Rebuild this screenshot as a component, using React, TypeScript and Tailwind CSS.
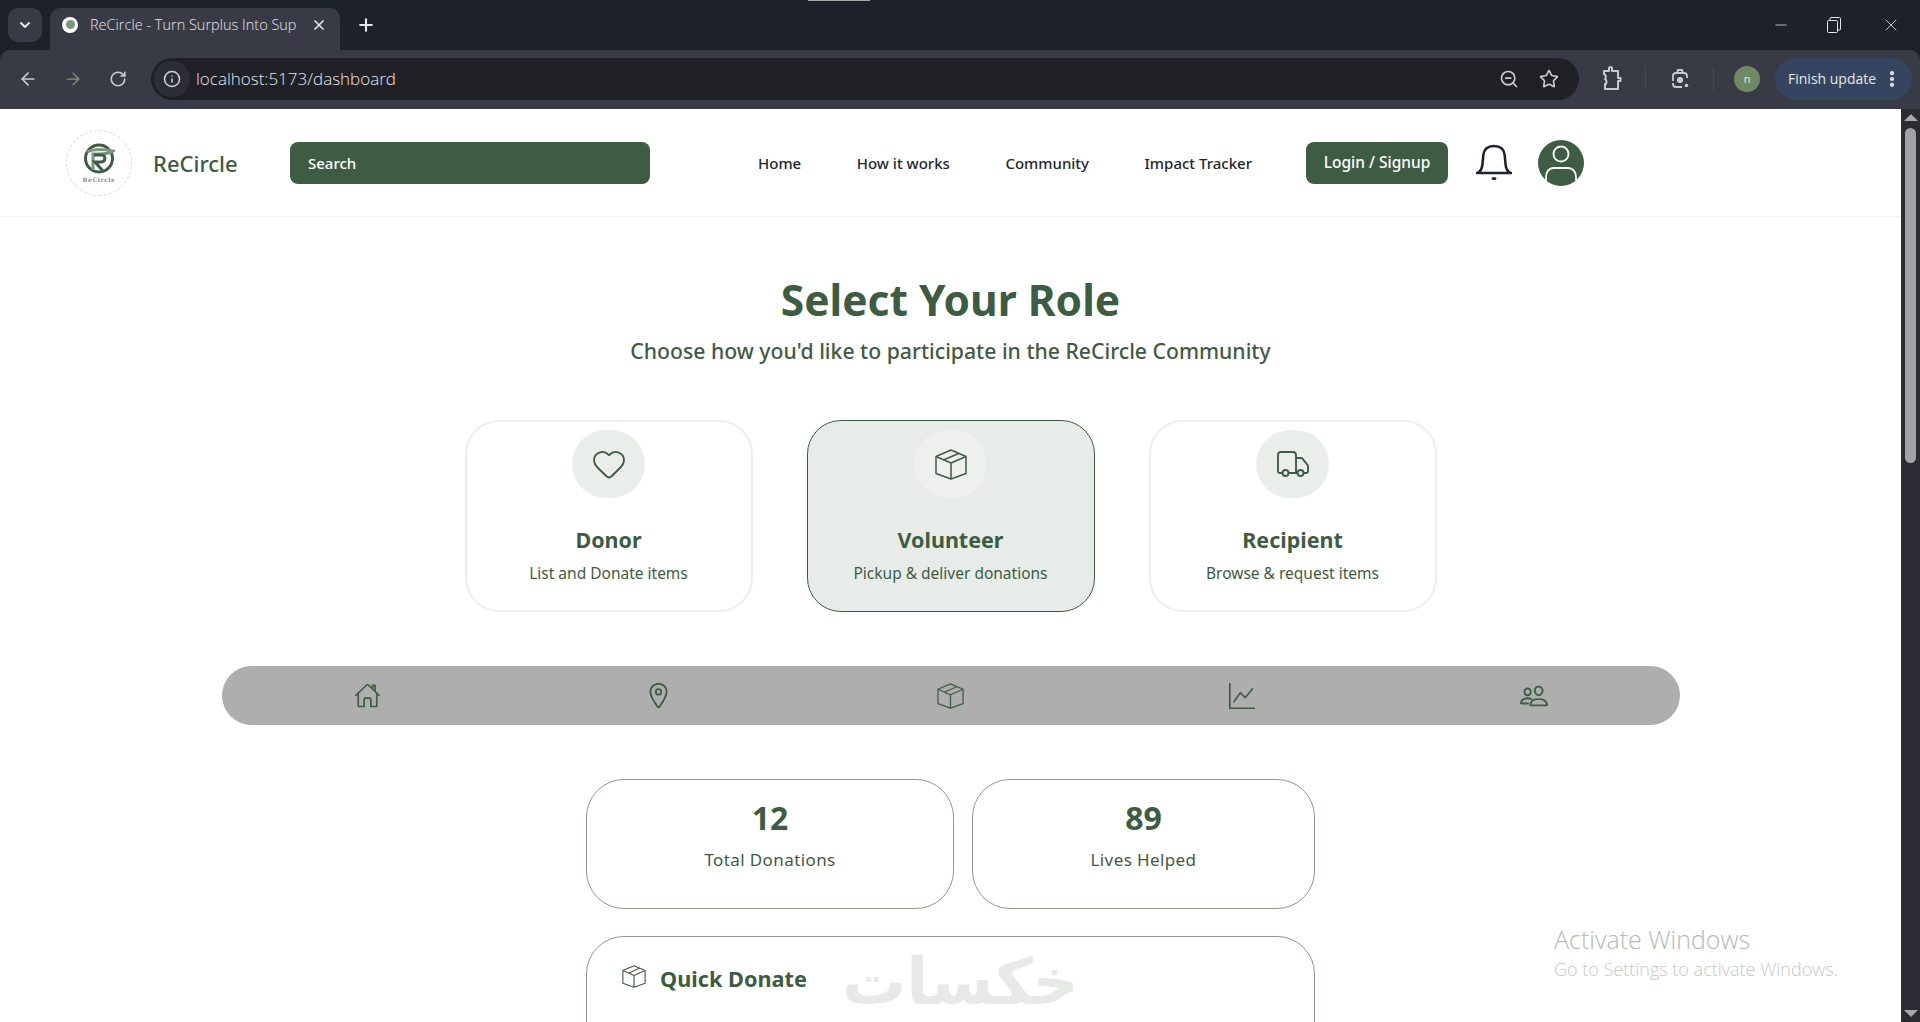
import type { ReactNode } from "react";
import { ArrowLeft, ArrowRight, ChevronDown, Heart, Info, Minus, MoreVertical, Plus, RotateCw, Star, Truck, X, ZoomOut } from "lucide-react";
import { BsGraphUp } from "react-icons/bs";
import { IoHomeOutline, IoLocationOutline, IoPeopleOutline } from "react-icons/io5";

const BoxIcon = ({ width, height }: { width: number; height: number }) => (
  <svg width={width} height={height} viewBox="0 0 32 31" fill="none" stroke="currentColor" strokeWidth="1.500" strokeLinejoin="round">
    <path d="M16 1l15 6.500v17L16 30 1 24.500v-17z" />
    <path d="M1 7.500L16 14l15-6.500M16 14v16" />
    <path d="M8.500 11l15-6.500" />
  </svg>
);

const roles: { title: string; text: string; icon: ReactNode; active: boolean }[] = [
  { title: "Donor", text: "List and Donate items", icon: <Heart size={36} strokeWidth={1.250} />, active: false },
  { title: "Volunteer", text: "Pickup & deliver donations", icon: <BoxIcon width={32} height={31} />, active: true },
  { title: "Recipient", text: "Browse & request items", icon: <Truck size={36} strokeWidth={1.250} />, active: false },
];

const navLinks = ["Home", "How it works", "Community", "Impact Tracker"];

const RestoreIcon = () => (
  <svg width="14" height="16" viewBox="0 0 14 16" fill="none" stroke="#e5e7eb" strokeWidth="1">
    <rect x="0.5" y="3.5" width="10" height="12" rx="1" />
    <path d="M3 3V1.5A1 1 0 0 1 4 .5h8.5a1 1 0 0 1 1 1V12a1 1 0 0 1-1 1H11" />
  </svg>
);

const PuzzleIcon = () => (
  <svg width="20" height="26" viewBox="0 0 20 26" fill="none" stroke="#c9cbd0" strokeWidth="2" strokeLinejoin="round">
    <path d="M2 5h5V2.500a1.500 1.500 0 0 1 3 0V5h6v7h2.500v3H16v8H3v-5c2 0 2-4 0-5 1.500-1 1-4-1-5z" />
  </svg>
);

const CaptureIcon = () => (
  <svg width="20" height="22" viewBox="0 0 20 22" fill="none" stroke="#c9cbd0" strokeWidth="1.8">
    <path d="M6 5h8a3 3 0 0 1 3 3v2M3 13V8a3 3 0 0 1 3-3M3 15v1a3 3 0 0 0 3 3h6" />
    <path d="M7 5l1-3h4l1 3" />
    <circle cx="10" cy="12" r="2.2" fill="#c9cbd0" />
    <circle cx="16.5" cy="17.5" r="1.8" fill="#c9cbd0" stroke="none" />
  </svg>
);

const Logo = () => (
  <div className="flex h-[66px] w-[66px] shrink-0 flex-col items-center rounded-full border border-dashed border-[#d5d7d5] pt-[12px]">
    <svg width="32" height="31" viewBox="0 0 32 31" fill="none">
      <circle cx="16" cy="15.5" r="13.5" stroke="#3e5c42" strokeWidth="3" />
      <path d="M4 9c6-3 16-3 26-1-4 3-10 3-14 3H10v16" stroke="#7d957f" strokeWidth="3" />
      <path d="M11 12h8c4 0 4 7-1 7h-6l8 9" stroke="#3e5c42" strokeWidth="3" />
    </svg>
    <span className="mt-[3px] font-['DejaVu_Serif',serif] text-[6px] leading-none font-bold tracking-[0.5px] text-[#8a8a8a]">ReCircle</span>
  </div>
);

const BellIcon = () => (
  <svg width="36" height="38" viewBox="0 0 36 38" fill="none" stroke="#1f2330" strokeWidth="2.6">
    <path d="M1 29c4-1 5-4 5.500-9l.8-9C8 5 12 2 18 2s10 3 10.700 9l.8 9c.5 5 1.500 8 5.500 9z" strokeLinejoin="round" />
    <ellipse cx="18" cy="34.500" rx="2.500" ry="1.500" fill="#1f2330" stroke="none" />
  </svg>
);

const AvatarIcon = () => (
  <div className="flex h-[46px] w-[46px] items-center justify-center overflow-hidden rounded-full bg-[#3e5c42]">
    <svg width="46" height="46" viewBox="0 0 46 46" fill="none" stroke="#fff" strokeWidth="1.800">
      <circle cx="23" cy="14" r="7.500" />
      <path d="M8 46v-9c0-5 3-9 8-9h14c5 0 8 4 8 9v9" />
    </svg>
  </div>
);

function BrowserChrome() {
  return (
    <div className="shrink-0 bg-[#1d212a] font-['Open_Sans',sans-serif] text-[#e5e7eb]">
      {/* tab strip */}
      <div className="flex h-[50px] items-start pt-[8px]">
        <div className="ml-[8px] flex h-[34px] w-[34px] items-center justify-center rounded-[10px] bg-[#383b45]">
          <ChevronDown size={16} strokeWidth={3} />
        </div>
        <div className="ml-[8px] flex h-[42px] w-[290px] items-center rounded-t-[10px] bg-[#383b45] pb-[9px] pl-[12px]">
          <div className="flex h-[16px] w-[16px] items-center justify-center rounded-full bg-white">
            <div className="h-[9px] w-[9px] rounded-full bg-[#7d957f]" />
          </div>
          <span className="ml-[12px] w-[206px] overflow-hidden text-[14.5px] font-light whitespace-nowrap">ReCircle - Turn Surplus Into Sup</span>
          <X size={16} strokeWidth={2.500} className="ml-[15px]" />
        </div>
        <Plus size={20} strokeWidth={2.500} className="mt-[7px] ml-[16px]" />
        <div className="mt-[7px] ml-auto flex items-center">
          <Minus size={18} strokeWidth={1} />
          <div className="ml-[37px]"><RestoreIcon /></div>
          <X size={20} strokeWidth={1} className="mr-[19px] ml-[40px]" />
        </div>
      </div>
      {/* toolbar */}
      <div className="flex h-[59px] items-center rounded-t-[10px] bg-[#383b45] pb-[1px]">
        <ArrowLeft size={20} strokeWidth={2} className="ml-[18px] text-[#c9cbd0]" />
        <ArrowRight size={20} strokeWidth={1.500} className="ml-[25px] text-[#7d9c78]" />
        <RotateCw size={18} strokeWidth={2.200} className="ml-[26px] text-[#c9cbd0]" />
        <div className="ml-[24px] flex h-[42px] w-[1428px] items-center rounded-full bg-[#1f2127] pl-[3px]">
          <div className="flex h-[36px] w-[36px] items-center justify-center rounded-full bg-[#2c2e36]">
            <Info size={18} strokeWidth={2} className="text-[#d4d5d8]" />
          </div>
          <span className="ml-[6px] text-[17px] font-light">localhost:5173/dashboard</span>
          <ZoomOut size={20} strokeWidth={2} className="ml-auto text-[#c9cbd0]" />
          <Star size={20} strokeWidth={2} className="mr-[20px] ml-[20px] text-[#c9cbd0]" />
        </div>
        <div className="ml-[23px]"><PuzzleIcon /></div>
        <div className="ml-[23px] h-[24px] w-px bg-[#3c4a62]" />
        <div className="ml-[24px]"><CaptureIcon /></div>
        <div className="ml-[23px] h-[24px] w-px bg-[#3c4a62]" />
        <div className="ml-[20px] flex h-[26px] w-[26px] items-center justify-center rounded-full bg-[#6f8a62] text-[11px]">n</div>
        <div className="ml-[15px] flex h-[42px] w-[137px] items-center rounded-full bg-[#36455f] pb-[1px] pl-[13px] text-[14px]">
          Finish update
          <MoreVertical size={20} strokeWidth={3} className="ml-[6px]" />
        </div>
      </div>
    </div>
  );
}

function Header() {
  return (
    <header className="flex h-[108px] items-center border-b border-[#f1f2f1] pl-[66px]">
      <Logo />
      <span className="ml-[21px] w-[137px] pt-[1px] text-[22px] font-medium text-[#3e5c42]">ReCircle</span>
      <div className="flex h-[42px] w-[360px] items-center rounded-[8px] bg-[#3e5c42] px-[18px] pt-[1px] text-[15px] font-medium text-white">Search</div>
      <nav className="ml-[108px] flex w-[494px] justify-between pt-[1px] text-[15px] font-medium text-[#23262f]">
        {navLinks.map((link) => (
          <a key={link} href="#">{link}</a>
        ))}
      </nav>
      <button className="ml-[54px] h-[42px] w-[142px] rounded-[8px] bg-[#3e5c42] pt-[1px] text-[15.5px] font-medium text-white">Login / Signup</button>
      <div className="ml-[28px]"><BellIcon /></div>
      <div className="ml-[26px]"><AvatarIcon /></div>
    </header>
  );
}

function RoleCard({ title, text, icon, active }: (typeof roles)[number]) {
  return (
    <div className={`flex h-[192px] w-[288px] flex-col items-center rounded-[34px] ${active ? "border border-[#3e5c42] bg-[#e8ece8] pt-[9px]" : "border-2 border-[#eceeec] bg-white pt-[8px]"}`}>
      <div className={`flex h-[68px] w-[73px] items-center justify-center rounded-full text-[#3e5c42] ${active ? "bg-[#edf0ed]" : "bg-[#eaeeea]"}`}>
        {icon}
      </div>
      <h3 className="mt-[27px] text-[21.5px] leading-[30px] font-bold text-[#3e5c42]">{title}</h3>
      <p className="mt-[6px] text-[15.5px] leading-[24px] text-[#3e5c42]">{text}</p>
    </div>
  );
}

export default function App() {
  return (
    <div className="relative flex h-[1022px] w-[1920px] flex-col overflow-hidden bg-white font-['Noto_Sans',sans-serif]">
      <BrowserChrome />
      <div className="flex min-h-0 flex-1">
        <main className="min-w-0 flex-1 overflow-hidden">
          <Header />
          <section className="flex flex-col items-center pt-[54px]">
            <h1 className="text-[42.5px] leading-[58px] font-bold text-[#3e5c42]">Select Your Role</h1>
            <p className="mt-[4px] text-[21.2px] leading-[36px] font-medium text-[#3e5c42]">Choose how you'd like to participate in the ReCircle Community</p>
            <div className="mt-[51px] flex gap-[54px]">
              {roles.map((role) => (
                <RoleCard key={role.title} {...role} />
              ))}
            </div>
            <div className="mt-[54px] grid h-[59px] w-[1458px] grid-cols-5 items-center justify-items-center rounded-[30px] bg-[#aeaeae] text-[#3e5c42]">
              <IoHomeOutline size={27} />
              <IoLocationOutline size={29} />
              <BoxIcon width={27} height={26} />
              <BsGraphUp size={26} />
              <IoPeopleOutline size={30} />
            </div>
            <div className="mt-[54px] flex gap-[18px]">
              <div className="flex h-[130px] w-[368px] flex-col items-center rounded-[38px] border border-[#8b9c8b] pt-[16px]">
                <span className="text-[32px] leading-[44px] font-bold text-[#3e5c42]">12</span>
                <span className="mt-[7px] text-[17px] leading-[26px] tracking-[0.4px] text-[#3e5c42]">Total Donations</span>
              </div>
              <div className="flex h-[130px] w-[343px] flex-col items-center rounded-[38px] border border-[#8b9c8b] pt-[16px]">
                <span className="text-[32px] leading-[44px] font-bold text-[#3e5c42]">89</span>
                <span className="mt-[7px] text-[17px] leading-[26px] tracking-[0.4px] text-[#3e5c42]">Lives Helped</span>
              </div>
            </div>
            <div className="relative mt-[27px] flex h-[240px] w-[729px] items-start rounded-[38px] border border-[#8b9c8b] pt-[26px] pl-[35px]">
              <div className="pt-[2px] text-[#3e5c42]"><BoxIcon width={24} height={23} /></div>
              <span className="ml-[14px] text-[21.7px] leading-[32px] font-bold text-[#3e5c42]">Quick Donate</span>
              <span dir="rtl" className="absolute top-[5px] left-[255px] font-['DejaVu_Sans',sans-serif] text-[64px] leading-[80px] font-bold text-[#e6e9e6]">خكسات</span>
            </div>
          </section>
        </main>
        {/* scrollbar */}
        <div className="flex w-[19px] shrink-0 flex-col items-center bg-[#2a2b33] py-[5px]">
          <div className="h-0 w-0 border-x-[7px] border-b-[7px] border-x-transparent border-b-[#a8a8a8]" />
          <div className="mt-[7px] h-[335px] w-[11px] rounded-full bg-[#a3a3a3]" />
          <div className="mt-auto h-0 w-0 border-x-[7px] border-t-[7px] border-x-transparent border-t-[#a8a8a8]" />
        </div>
      </div>
      {/* windows watermark */}
      <div className="pointer-events-none absolute top-[922px] left-[1554px] font-['Open_Sans',sans-serif] font-light">
        <div className="text-[25px] leading-[34px] text-[#b8b8b8]">Activate Windows</div>
        <div className="text-[18px] leading-[26px] text-[#c8c8c8]">Go to Settings to activate Windows.</div>
      </div>
      <div className="absolute top-0 left-[808px] h-px w-[62px] bg-[#a8a8a8]" />
    </div>
  );
}
